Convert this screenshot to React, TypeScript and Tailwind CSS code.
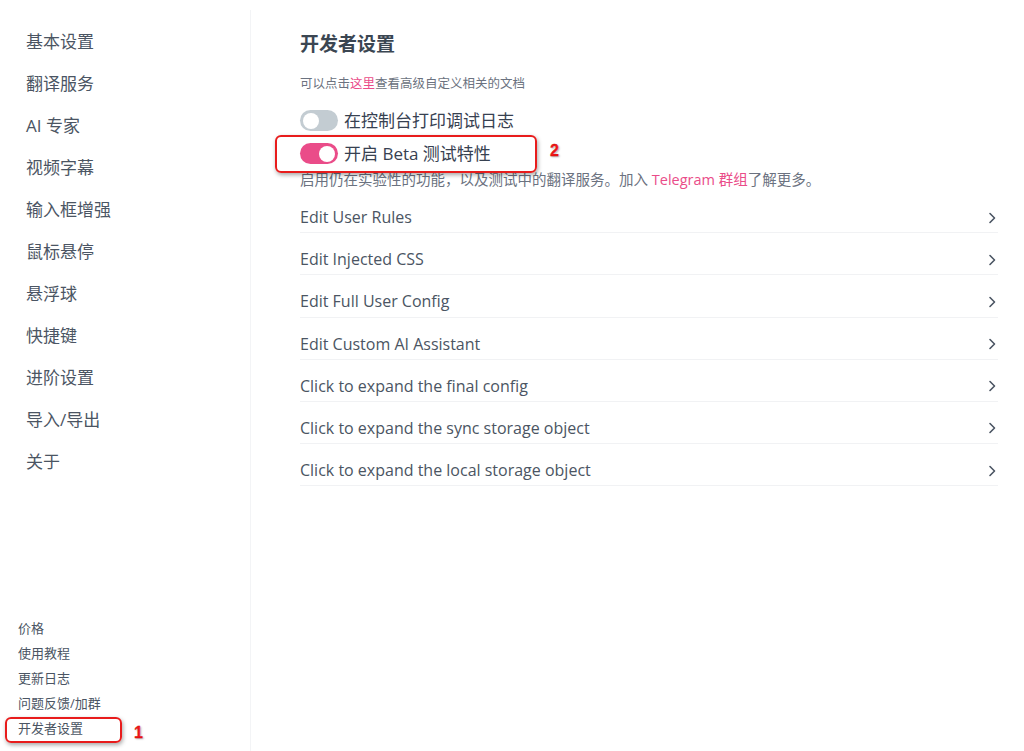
import React from "react";

const FONT = '"Open Sans", "Noto Sans CJK SC", sans-serif';

const navTop = ["基本设置", "翻译服务", "AI 专家", "视频字幕", "输入框增强", "鼠标悬停", "悬浮球", "快捷键", "进阶设置", "导入/导出", "关于"];
const navBottom = ["价格", "使用教程", "更新日志", "问题反馈/加群", "开发者设置"];
const rows = [
  "Edit User Rules",
  "Edit Injected CSS",
  "Edit Full User Config",
  "Edit Custom AI Assistant",
  "Click to expand the final config",
  "Click to expand the sync storage object",
  "Click to expand the local storage object",
];

function Chevron() {
  return (
    <svg width="8" height="12" viewBox="0 0 8 12" fill="none">
      <path d="M2 1.5 L6.5 6 L2 10.5" stroke="#4b5563" strokeWidth="1.6" strokeLinecap="round" strokeLinejoin="round" />
    </svg>
  );
}

function Toggle({ on }: { on: boolean }) {
  return (
    <div
      className={`w-[38px] h-[21px] rounded-full flex items-center px-[3px] ${on ? "bg-[#ea4c89] justify-end" : "bg-[#c3ccd2] justify-start"}`}
    >
      <div className="w-[16px] h-[16px] rounded-full bg-white" />
    </div>
  );
}

function Mark({ n }: { n: string }) {
  return (
    <span
      className="text-[16px] font-bold text-[#f01818] leading-none [text-shadow:0_0_1px_#fff,1px_1px_2px_rgba(0,0,0,0.35)]"
      style={{ fontFamily: '"Liberation Sans", sans-serif', WebkitTextStroke: "0.3px #c00" }}
    >
      {n}
    </span>
  );
}

export default function App() {
  return (
    <div className="w-[1024px] h-[751px] bg-white flex relative overflow-hidden" style={{ fontFamily: FONT }}>
      {/* Sidebar */}
      <div className="w-[250px] h-full flex flex-col justify-between pt-[21px] pb-[10px]">
        <div className="flex flex-col pl-[26px]">
          {navTop.map((t) => (
            <div key={t} className="h-[42px] flex items-center text-[17px] text-[#4b5563]">
              {t}
            </div>
          ))}
        </div>
        <div className="flex flex-col pl-[18px]">
          {navBottom.map((t) => (
            <div key={t} className="h-[25px] flex items-center text-[13px] text-[#4b5563]">
              {t}
            </div>
          ))}
        </div>
      </div>
      <div className="w-px mt-[10px] bg-[#f3f4f6]" />

      {/* Main */}
      <div className="flex-1 pl-[49px] pr-[26px] pt-[30px] flex flex-col">
        <div className="text-[19px] leading-[28px] font-bold text-[#3b4652]">开发者设置</div>
        <div className="mt-[16px] text-[12.5px] leading-[20px] text-[#6b7280]">
          可以点击<span className="text-[#ea4c89]">这里</span>查看高级自定义相关的文档
        </div>
        <div className="mt-[10px] h-[33px] flex items-center gap-[6px]">
          <Toggle on={false} />
          <span className="text-[17px] text-[#374151]">在控制台打印调试日志</span>
        </div>
        <div className="h-[33px] flex items-center gap-[6px]">
          <Toggle on={true} />
          <span className="text-[17px] text-[#374151]">开启 Beta 测试特性</span>
        </div>
        <div className="text-[14.5px] leading-[20px] text-[#6b7280]">
          启用仍在实验性的功能，以及测试中的翻译服务。加入 <span className="text-[#ea4c89]">Telegram 群组</span>了解更多。
        </div>
        <div className="mt-[1px] flex flex-col">
          {rows.map((r) => (
            <div key={r} className="pt-[17px] pb-[5.2px] border-b border-[#f1f2f4] flex items-center justify-between">
              <span className="text-[16px] leading-[19px] text-[#4b5563]">{r}</span>
              <span className="mr-[2px]"><Chevron /></span>
            </div>
          ))}
        </div>
      </div>

      {/* Annotations */}
      <div className="absolute left-[275px] top-[135px] w-[262px] h-[38px] border-2 border-[#e81c1c] rounded-[6px] shadow-[1px_2px_4px_rgba(0,0,0,0.35)]" />
      <div className="absolute left-[550px] top-[138px]"><Mark n="2" /></div>
      <div className="absolute left-[5px] top-[717px] w-[117px] h-[26px] border-2 border-[#e81c1c] rounded-[6px] shadow-[1px_2px_4px_rgba(0,0,0,0.35)]" />
      <div className="absolute left-[134px] top-[720px]"><Mark n="1" /></div>
    </div>
  );
}
